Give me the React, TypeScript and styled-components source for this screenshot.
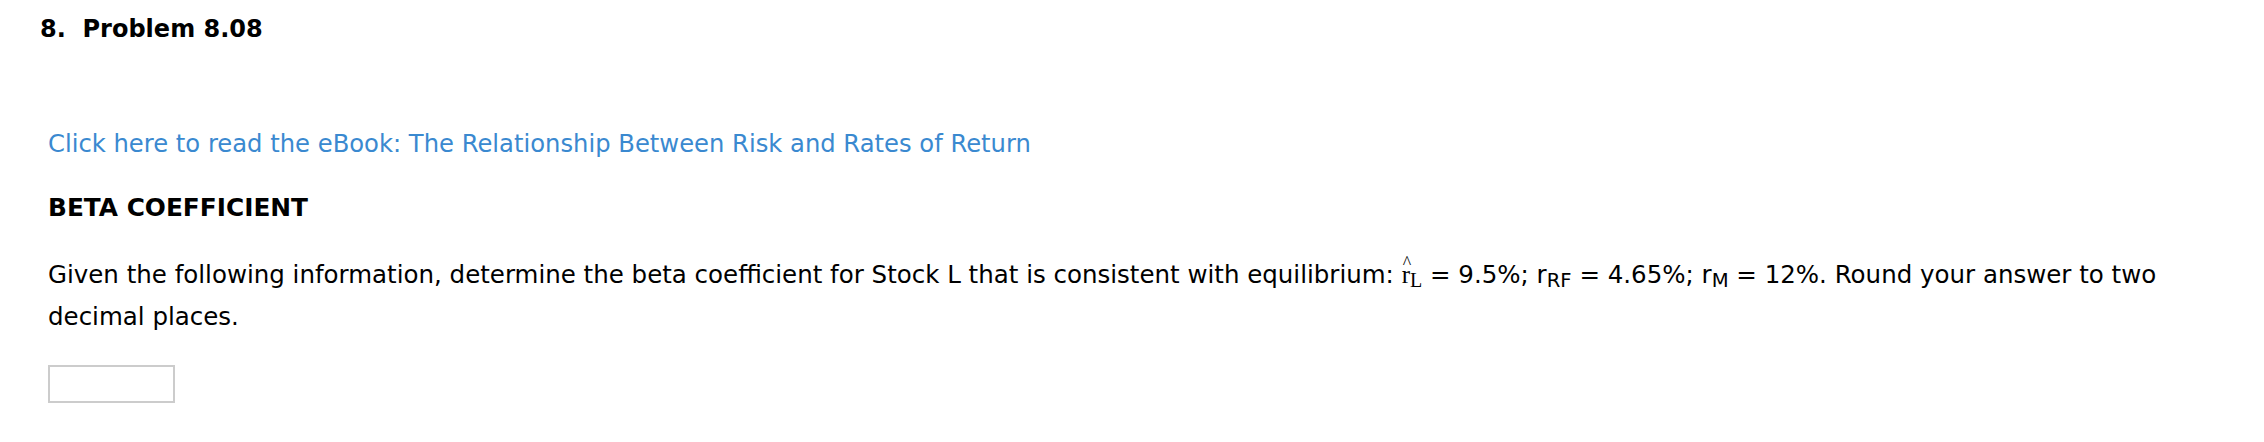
import React from 'react';
import styled, { createGlobalStyle } from 'styled-components';

const GlobalStyle = createGlobalStyle`
  html, body {
    margin: 0;
    padding: 0;
    background: #ffffff;
  }
  body {
    font-family: "DejaVu Sans", Verdana, sans-serif;
    color: #000000;
  }
`;

const Page = styled.div`
  width: 2264px;
  height: 442px;
  box-sizing: border-box;
  padding: 14px 0 0 40px;
`;

const Title = styled.h1`
  margin: 0;
  font-size: 24px;
  font-weight: bold;
  line-height: 30px;
  white-space: pre;
`;

const Body = styled.div`
  padding: 85px 0 0 8px;
  display: flex;
  flex-direction: column;
`;

const BookLink = styled.a`
  color: #3a89d0;
  font-size: 24.25px;
  line-height: 30px;
  text-decoration: none;
`;

const SectionTitle = styled.h2`
  margin: 34px 0 0;
  font-size: 24.8px;
  font-weight: bold;
  line-height: 30px;
`;

const Question = styled.p`
  margin: 31px 0 0;
  max-width: 2150px;
  font-size: 24.5px;
  line-height: 42px;
`;

const Serif = styled.span`
  font-family: "Liberation Serif", "Times New Roman", serif;
  font-size: 25px;
`;

const Hat = styled.span`
  position: relative;
  display: inline-block;
  &::before {
    content: "^";
    position: absolute;
    left: 1px;
    top: -12px;
    font-size: 18px;
  }
`;

const Sub = styled.sub<{ $serif?: boolean }>`
  font-size: 0.8em;
  vertical-align: -4px;
  line-height: 1;
  font-family: ${(p) => (p.$serif ? '"Liberation Serif", serif' : 'inherit')};
`;

const AnswerBox = styled.input`
  margin-top: 27px;
  width: 127px;
  height: 38px;
  box-sizing: border-box;
  border: 2px solid #cccccc;
  background: #ffffff;
  outline: none;
`;

export default function App(): JSX.Element {
  return (
    <Page>
      <GlobalStyle />
      <Title>{'8.  Problem 8.08'}</Title>
      <Body>
        <BookLink href="#">
          Click here to read the eBook: The Relationship Between Risk and Rates of Return
        </BookLink>
        <SectionTitle>BETA COEFFICIENT</SectionTitle>
        <Question>
          Given the following information, determine the beta coefficient for Stock L that is
          consistent with equilibrium:{' '}
          <Serif>
            <Hat>r</Hat>
            <Sub $serif>L</Sub>
          </Serif>{' '}
          = 9.5%; r<Sub>RF</Sub> = 4.65%; r<Sub>M</Sub>
          <span> = 12%. Round your answer to two</span> <span>decimal places.</span>
        </Question>
        <div>
          <AnswerBox type="text" aria-label="answer" />
        </div>
      </Body>
    </Page>
  );
}
